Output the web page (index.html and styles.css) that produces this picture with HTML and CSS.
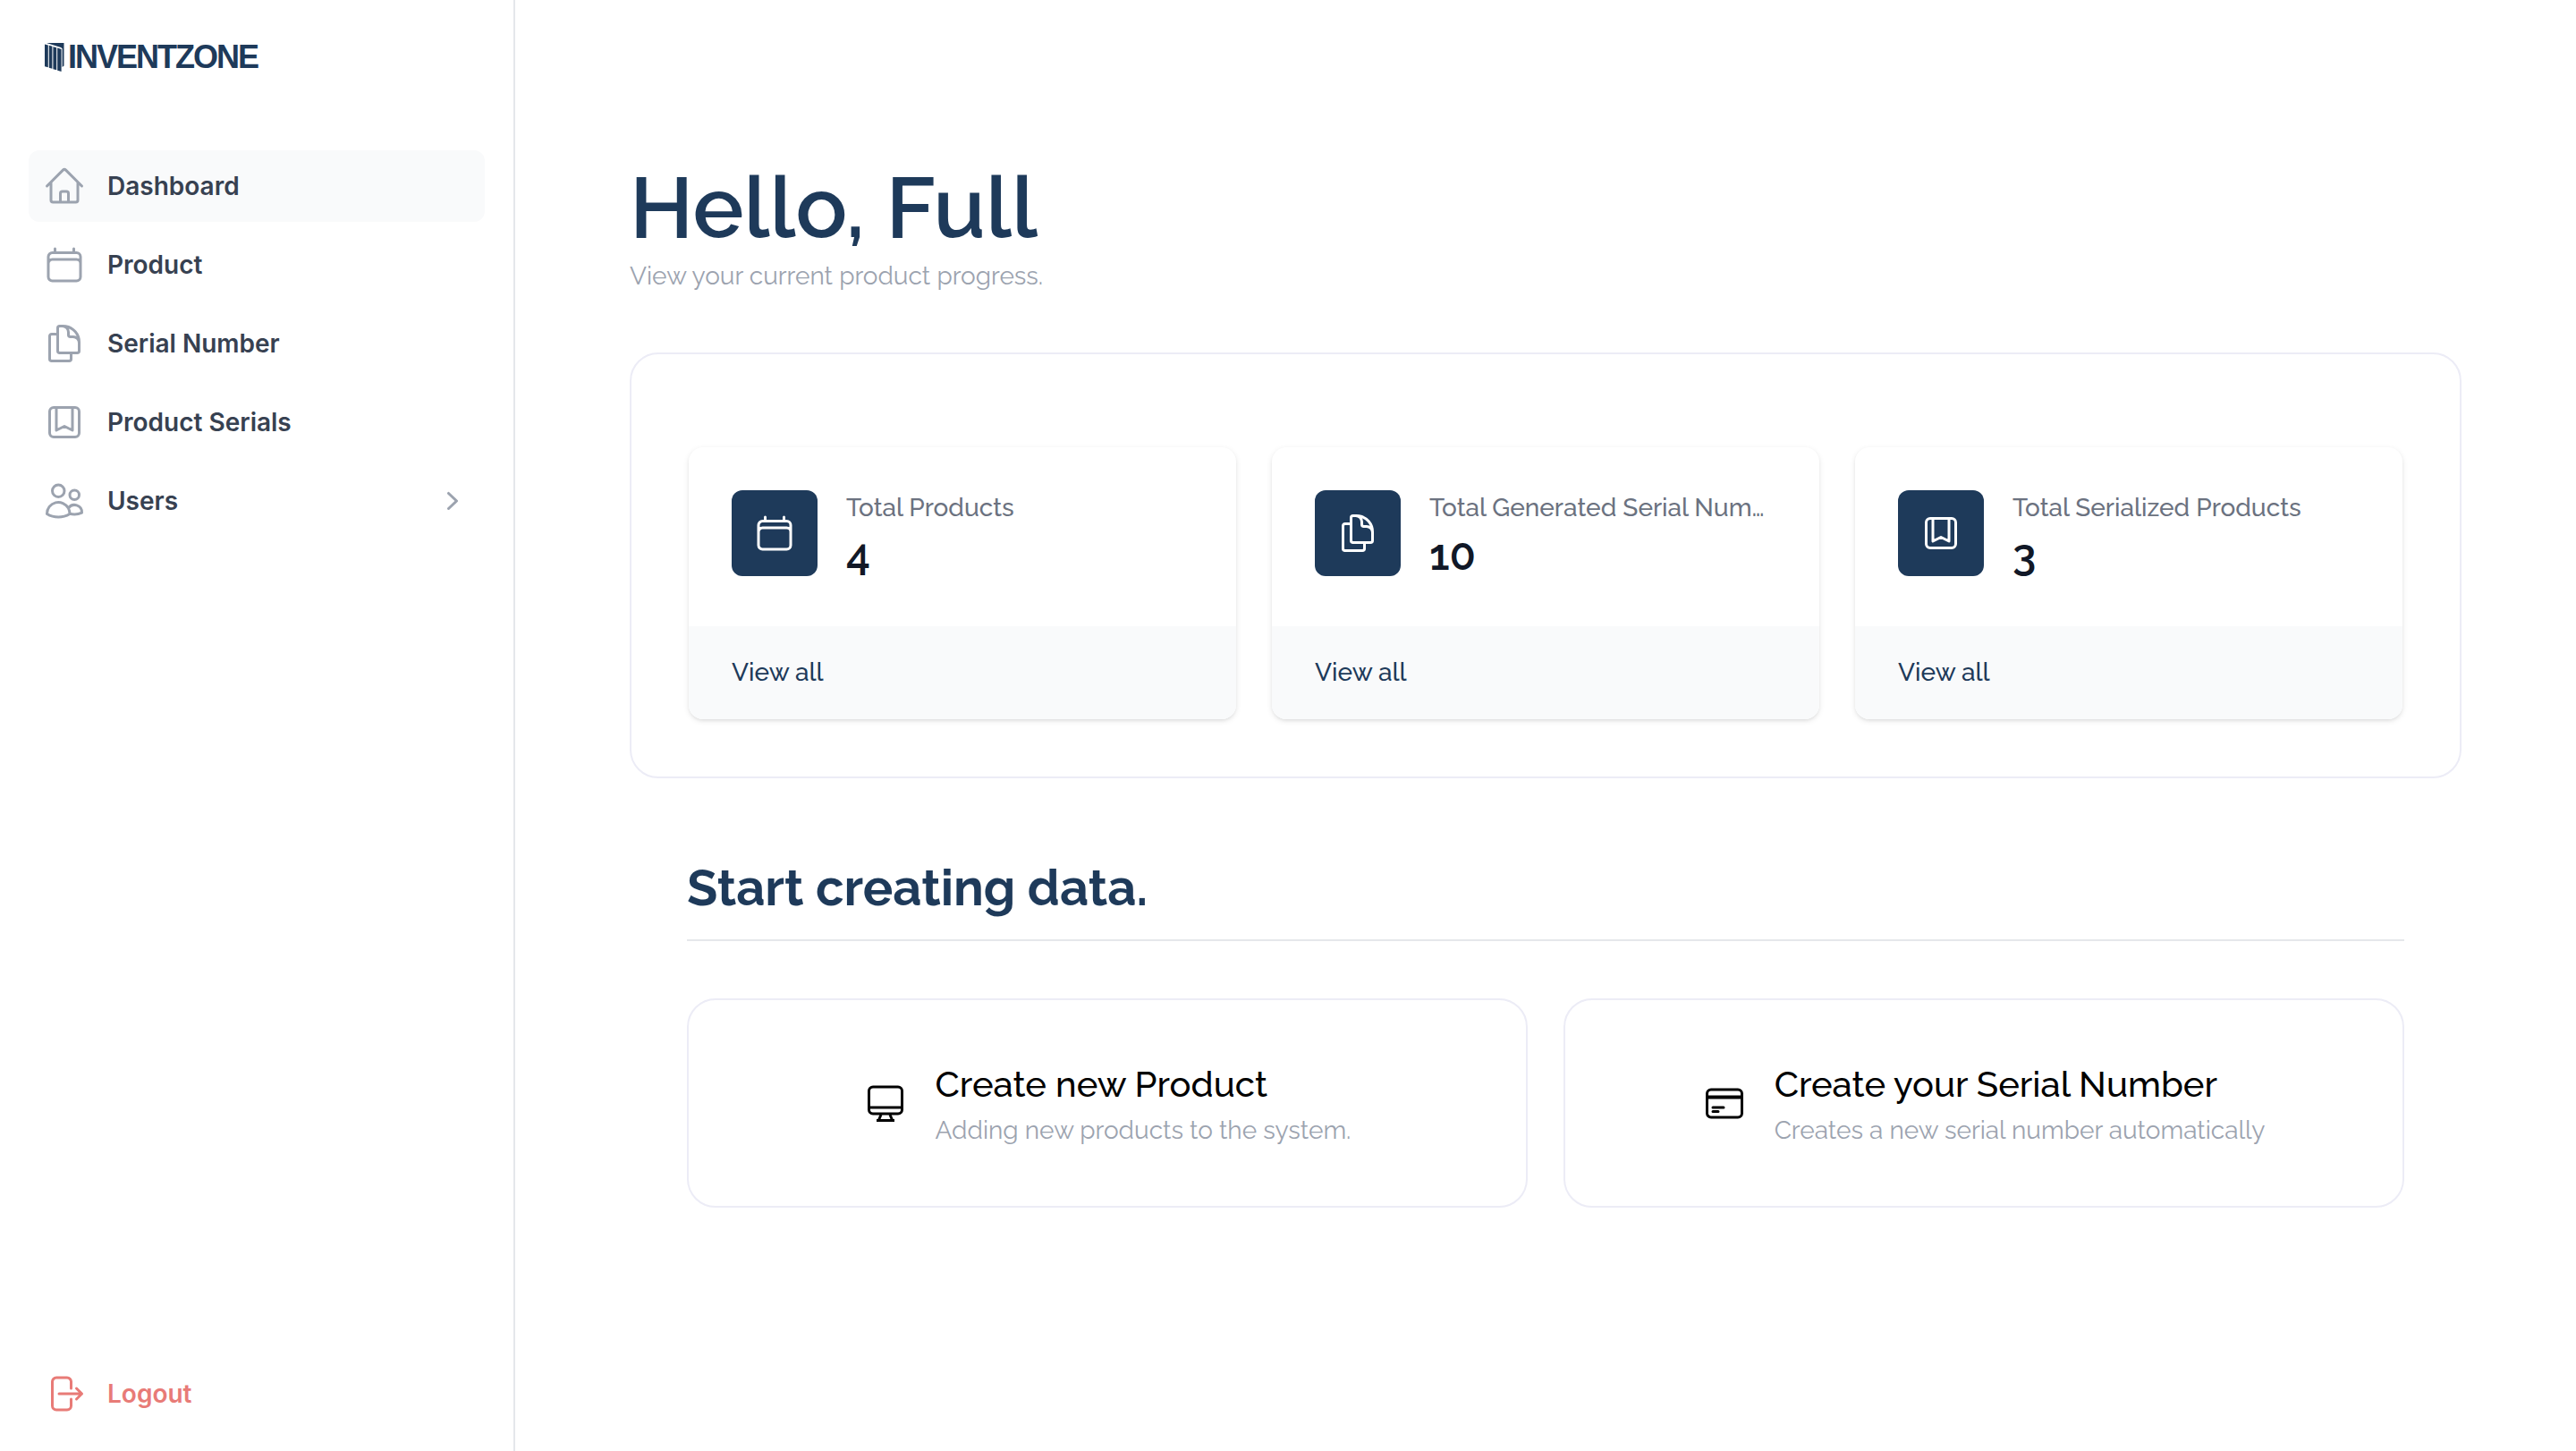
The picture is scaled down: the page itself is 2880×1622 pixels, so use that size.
FILE: index.html
```html
<!DOCTYPE html>
<html lang="en">
<head>
<meta charset="utf-8">
<title>Inventzone - Dashboard</title>
<link rel="stylesheet" href="styles.css">
</head>
<body>
<svg class="sprite" aria-hidden="true">
  <symbol id="home" viewBox="0 0 24 24"><path d="M2.25 12l8.954-8.955c.44-.439 1.152-.439 1.591 0L21.75 12M4.5 9.75v10.125c0 .621.504 1.125 1.125 1.125H9.75v-4.875c0-.621.504-1.125 1.125-1.125h2.25c.621 0 1.125.504 1.125 1.125V21h4.125c.621 0 1.125-.504 1.125-1.125V9.75M8.25 21h8.25"/></symbol>
  <symbol id="calendar" viewBox="0 0 24 24"><path d="M6.75 3v2.25M17.25 3v2.25M3 18.75V7.5a2.25 2.25 0 012.25-2.25h13.5A2.25 2.25 0 0121 7.5v11.25m-18 0A2.25 2.25 0 005.25 21h13.5A2.25 2.25 0 0021 18.75m-18 0v-7.5A2.25 2.25 0 015.25 9h13.5A2.25 2.25 0 0121 11.25v7.5"/></symbol>
  <symbol id="documents" viewBox="0 0 24 24"><path d="M15.75 17.25v3.375c0 .621-.504 1.125-1.125 1.125h-9.75a1.125 1.125 0 01-1.125-1.125V7.875c0-.621.504-1.125 1.125-1.125H6.75a9.06 9.06 0 011.5.124m7.5 10.376h3.375c.621 0 1.125-.504 1.125-1.125V11.25c0-4.46-3.243-8.161-7.5-8.876a9.06 9.06 0 00-1.5-.124H9.375c-.621 0-1.125.504-1.125 1.125v3.5m7.5 10.375H9.375a1.125 1.125 0 01-1.125-1.125v-9.25m12 6.625v-1.875a3.375 3.375 0 00-3.375-3.375h-1.5a1.125 1.125 0 01-1.125-1.125v-1.5a3.375 3.375 0 00-3.375-3.375H9.75"/></symbol>
  <symbol id="bookmark" viewBox="0 0 24 24"><path d="M16.5 3.75V16.5L12 14.25 7.5 16.5V3.75m9 0H18A2.25 2.25 0 0120.25 6v12A2.25 2.25 0 0118 20.25H6A2.25 2.25 0 013.75 18V6A2.25 2.25 0 016 3.75h1.5m9 0h-9"/></symbol>
  <symbol id="users" viewBox="0 0 24 24"><path d="M15 19.128a9.38 9.38 0 002.625.372 9.337 9.337 0 004.121-.952 4.125 4.125 0 00-7.533-2.493M15 19.128v-.003c0-1.113-.285-2.16-.786-3.07M15 19.128v.106A12.318 12.318 0 018.624 21c-2.331 0-4.512-.645-6.374-1.766l-.001-.109a6.375 6.375 0 0111.964-3.07M12 6.375a3.375 3.375 0 11-6.75 0 3.375 3.375 0 016.75 0zm8.25 2.25a2.625 2.625 0 11-5.25 0 2.625 2.625 0 015.25 0z"/></symbol>
  <symbol id="logout" viewBox="0 0 24 24"><path d="M15.75 9V5.25A2.25 2.25 0 0013.5 3h-6a2.25 2.25 0 00-2.25 2.25v13.5A2.25 2.25 0 007.5 21h6a2.25 2.25 0 002.25-2.25V15m3 0l3-3m0 0l-3-3m3 3H9"/></symbol>
</svg>
<div class="layout">
  <aside class="sidebar">
    <a class="brand" href="#">
      <svg class="brand-mark" viewBox="0 0 22 32" aria-hidden="true"><path d="M0 1.500l3.800 1v24.800L0 26.200zM4.800 2.800l3.600 1v25l-3.600-1zM9.400 4.200l3.800 1v25l-3.800-1zM14.200 5.600l4.400 1.400v25l-4.400-1.300zM2 0h19.500v25.500L19.600 27V6.200L18 5z"/></svg>
      <span>INVENTZONE</span>
    </a>
    <nav class="nav" aria-label="Main">
      <a class="nav-item nav-item-active" href="#" aria-current="page"><svg class="icon"><use href="#home"/></svg>Dashboard</a>
      <a class="nav-item" href="#"><svg class="icon"><use href="#calendar"/></svg>Product</a>
      <a class="nav-item" href="#"><svg class="icon"><use href="#documents"/></svg>Serial Number</a>
      <a class="nav-item" href="#"><svg class="icon"><use href="#bookmark"/></svg>Product Serials</a>
      <button class="nav-item" type="button" aria-expanded="false"><svg class="icon"><use href="#users"/></svg>Users<svg class="chevron" viewBox="0 0 20 20"><path d="M7.210 14.770a.75.75 0 01.02-1.060L11.168 10 7.230 6.290a.75.75 0 111.040-1.080l4.500 4.250a.75.75 0 010 1.080l-4.500 4.250a.75.75 0 01-1.060-.02z"/></svg></button>
    </nav>
    <button class="nav-item nav-logout" type="button"><svg class="icon"><use href="#logout"/></svg>Logout</button>
  </aside>
  <main class="main">
    <header class="intro">
      <h1>Hello, Full</h1>
      <p>View your current product progress.</p>
    </header>
    <section class="stats" aria-label="Totals">
      <article class="stat">
        <div class="stat-body">
          <span class="stat-icon"><svg class="icon"><use href="#calendar"/></svg></span>
          <dl><dt>Total Products</dt><dd>4</dd></dl>
        </div>
        <div class="stat-footer"><a href="#">View all</a></div>
      </article>
      <article class="stat">
        <div class="stat-body">
          <span class="stat-icon"><svg class="icon"><use href="#documents"/></svg></span>
          <dl><dt>Total Generated Serial Num…</dt><dd>10</dd></dl>
        </div>
        <div class="stat-footer"><a href="#">View all</a></div>
      </article>
      <article class="stat">
        <div class="stat-body">
          <span class="stat-icon"><svg class="icon"><use href="#bookmark"/></svg></span>
          <dl><dt>Total Serialized Products</dt><dd>3</dd></dl>
        </div>
        <div class="stat-footer"><a href="#">View all</a></div>
      </article>
    </section>
    <section class="create">
      <h2>Start creating data.</h2>
      <div class="actions">
        <a class="action" href="#">
          <svg class="action-icon" viewBox="0 0 48 48"><rect x="5.500" y="6" width="37" height="30" rx="4.500"/><path d="M5 29h38M19 37l-2.500 6M29 37l2.500 6M14 43.500h20"/></svg>
          <span class="action-text"><span class="action-title">Create new Product</span><span class="action-note">Adding new products to the system.</span></span>
        </a>
        <a class="action" href="#">
          <svg class="action-icon" viewBox="0 0 48 48"><rect x="4.500" y="9" width="39" height="31" rx="4.500"/><path d="M4 17.500h40" stroke-width="4"/><path d="M11 29h12M11 33.500h6" stroke-linecap="round"/></svg>
          <span class="action-text"><span class="action-title">Create your Serial Number</span><span class="action-note">Creates a new serial number automatically</span></span>
        </a>
      </div>
    </section>
  </main>
</div>
</body>
</html>
```
FILE: styles.css
```css
* { box-sizing: border-box; }
body, h1, h2, p, dl, dd { margin: 0; }
body {
  background: #fff;
  color: #111827;
  font: 500 28px/40px Raleway, Lato, sans-serif;
}
a { color: inherit; text-decoration: none; }
button { border: 0; background: none; text-align: left; cursor: pointer; }
.sprite { display: none; }

.layout {
  display: grid;
  grid-template-columns: 576px minmax(0, 1fr);
  min-height: 100vh;
}

.icon {
  flex: none;
  width: 48px;
  height: 48px;
  fill: none;
  stroke: currentColor;
  stroke-width: 1.5;
  stroke-linecap: round;
  stroke-linejoin: round;
}

/* Sidebar */
.sidebar {
  display: flex;
  flex-direction: column;
  padding: 40px 32px 24px;
  border-right: 2px solid #e5e7eb;
  font-family: Inter, sans-serif;
}
.brand {
  display: flex;
  align-items: center;
  gap: 4px;
  height: 48px;
  margin-bottom: 80px;
  padding-left: 18px;
  color: #1e3a5a;
  font-family: "Liberation Sans", Arial, sans-serif;
  font-size: 36px;
  font-weight: 700;
  line-height: 44px;
  letter-spacing: -2px;
}
.brand-mark { width: 22px; height: 32px; fill: currentColor; }
.nav { display: grid; gap: 8px; }
.nav-item {
  display: flex;
  align-items: center;
  gap: 24px;
  width: 100%;
  padding: 16px;
  border-radius: 12px;
  color: #374151;
  font: 600 28px/40px Inter, sans-serif;
}
.nav-item-active { background: #f9fafb; }
.nav-item .icon { color: #9ca3af; }
.chevron { width: 40px; height: 40px; margin-left: auto; fill: #9ca3af; }
.nav-logout { margin-top: auto; color: #e87b77; }
.nav-logout .icon { color: inherit; }

/* Content */
.main { padding: 184px 128px 128px; }
.intro { margin-bottom: 65px; }
h1 {
  margin-bottom: 9px;
  color: #1e3a5a;
  font-size: 96px;
  font-weight: 600;
  line-height: 96px;
}
.intro p, .action-note { color: #9ca3af; font-weight: 400; }

.stats {
  display: grid;
  grid-template-columns: repeat(3, minmax(0, 1fr));
  gap: 40px;
  padding: 104px 64px 64px;
  border: 2px solid #ececf6;
  border-radius: 32px;
}
.stat {
  overflow: hidden;
  border-radius: 16px;
  box-shadow: 0 2px 6px rgba(0, 0, 0, .1), 0 2px 4px -2px rgba(0, 0, 0, .1);
}
.stat-body {
  display: flex;
  gap: 32px;
  padding: 48px;
}
.stat-icon {
  display: grid;
  flex: none;
  place-items: center;
  width: 96px;
  height: 96px;
  border-radius: 12px;
  background: #1e3a5a;
  color: #fff;
}
.stat dl { min-width: 0; }
.stat dt { color: #6b7280; white-space: nowrap; }
.stat dd {
  font-size: 48px;
  font-weight: 600;
  line-height: 64px;
}
.stat-footer {
  padding: 32px 48px;
  background: #f9fafb;
  color: #1e3a5a;
}

.create { padding: 88px 64px 0; }
h2 {
  padding-bottom: 24px;
  border-bottom: 2px solid #e5e7eb;
  color: #1e3a5a;
  font-size: 56px;
  font-weight: 700;
  line-height: 68px;
}
.actions {
  display: grid;
  grid-template-columns: repeat(2, minmax(0, 1fr));
  gap: 40px;
  margin-top: 64px;
}
.action {
  display: flex;
  align-items: center;
  justify-content: center;
  gap: 32px;
  padding: 64px;
  border: 2px solid #ececf6;
  border-radius: 32px;
}
.action-icon {
  flex: none;
  width: 48px;
  height: 48px;
  fill: none;
  stroke: #000;
  stroke-width: 3;
}
.action-text { display: grid; gap: 2px; }
.action-title { color: #000; font-size: 40px; line-height: 60px; }
```
